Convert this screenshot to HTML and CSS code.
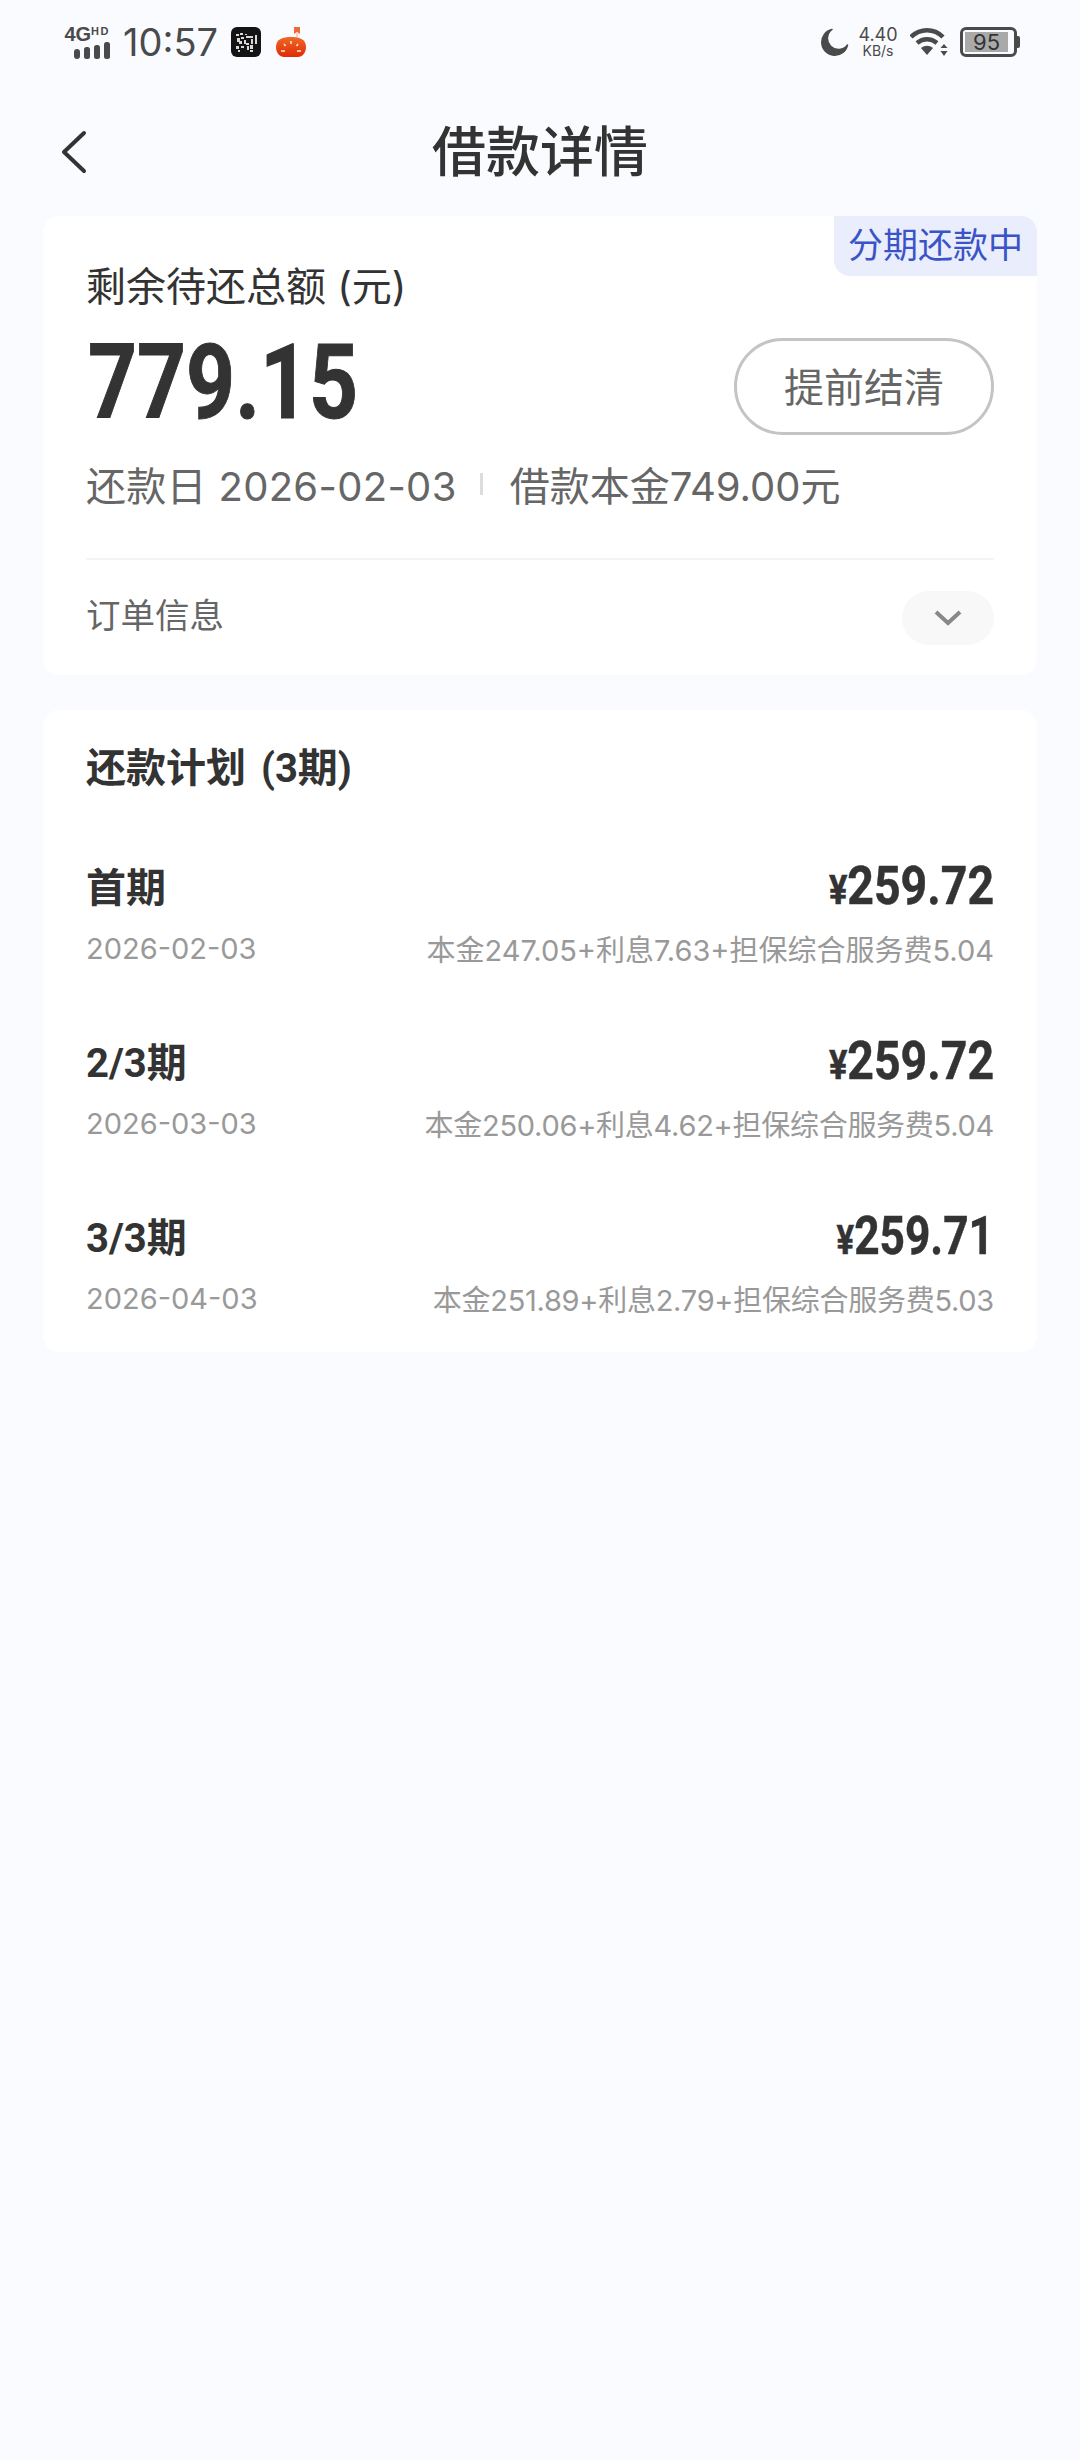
FILE: index.html
```html
<!DOCTYPE html>
<html lang="zh-CN">
<head>
  <meta charset="UTF-8" />
  <meta name="viewport" content="width=device-width, initial-scale=1.0"/>
  <title>借款详情</title>
  <link rel="stylesheet" href="styles.css">
</head>
<body>
  <div class="status-bar">
    <div class="status-left">
      <div class="net">
        <div class="net-text"><span class="net-4g">4G</span><span class="net-hd">HD</span></div>
        <svg class="net-bars" width="36" height="17" viewBox="0 0 36 17">
          <rect x="0" y="7" width="6" height="10" rx="3" fill="#4a4a4a"/>
          <rect x="10" y="5" width="6" height="12" rx="2.5" fill="#4a4a4a"/>
          <rect x="20" y="3" width="6" height="14" rx="2.5" fill="#4a4a4a"/>
          <rect x="30" y="0" width="6" height="17" rx="2.5" fill="#4a4a4a"/>
        </svg>
      </div>
      <span class="time">10:57</span>
      <svg class="app-icon" width="30" height="30" viewBox="0 0 30 30">
        <rect width="30" height="30" rx="6" fill="#141414"/>
        <path d="M5 7h3v2H5zM9 6h3v2H9zM14 7h2v1h-2zM24 8h2v9h-2zM6 11h3v4H6zM10 10h3v2h-3zM15 9h7v2h-7zM20 12h2v5h-2zM8 14h3v3H8zM13 13h2v4h-2zM15 16h3v2h-3zM5 19h3v3H5zM10 19h3v2h-3zM16 19h2v4h-2zM19 18h3v4h-3zM7 23h2v2H7zM19 23h3v2h-3z" fill="#d8d8d8"/>
      </svg>
      <svg class="app-icon" width="30" height="30" viewBox="0 0 30 30">
        <defs>
          <linearGradient id="pumpkin" x1="0" y1="0" x2="0" y2="1">
            <stop offset="0" stop-color="#ee6a24"/>
            <stop offset="1" stop-color="#e02a08"/>
          </linearGradient>
        </defs>
        <path d="M18 0h6v7l-3-2-3 2z" fill="#ee6a3a"/>
        <path d="M21 6v5" stroke="#f2a98a" stroke-width="1"/>
        <path d="M15 10c8 0 15 2 15 10 0 7-5 10-8 10H8c-3 0-8-3-8-10 0-8 7-10 15-10z" fill="url(#pumpkin)"/>
        <path d="M15 14v3M8 17l1.500 2M22 17l-1.500 2M5 24h4M21 24h4" stroke="#fbe3d2" stroke-width="1.600"/>
      </svg>
    </div>
    <div class="status-right">
      <svg width="28" height="28" viewBox="0 0 28 28">
        <path d="M11 1.500A13 13 0 1 0 26.500 17A11.100 11.100 0 1 1 11 1.500z" fill="#4a4a4a" stroke="#4a4a4a" stroke-width="1.500" stroke-linejoin="round"/>
      </svg>
      <div class="speed"><span class="speed-num">4.40</span><span class="speed-unit">KB/s</span></div>
      <svg class="wifi" width="38" height="28" viewBox="0 0 38 28">
        <path d="M1 9c9-9 23-9 32 0" fill="none" stroke="#4a4a4a" stroke-width="4.500"/>
        <path d="M7 15c6-5 14-5 20 0" fill="none" stroke="#4a4a4a" stroke-width="4.500"/>
        <path d="M11 20c4-3 8-3 12 0l-6 7z" fill="#4a4a4a"/>
        <path d="M34 16l3.500 4h-7zM34 28l3.500-5h-7z" fill="#4a4a4a"/>
      </svg>
      <div class="battery">
        <div class="battery-body"><div class="battery-fill">95</div></div>
        <div class="battery-nub"></div>
      </div>
    </div>
  </div>

  <div class="nav-bar">
    <svg class="nav-back" width="26" height="44" viewBox="0 0 26 44">
      <path d="M23 3L3 22l20 19" fill="none" stroke="#333" stroke-width="4" stroke-linecap="round" stroke-linejoin="round"/>
    </svg>
    <h1 class="nav-title">借款详情</h1>
  </div>

  <section class="card card-summary">
    <span class="tag">分期还款中</span>
    <p class="total-label">剩余待还总额 (元)</p>
    <div class="total-row">
      <span class="total-amount">779.15</span>
      <button class="btn-settle">提前结清</button>
    </div>
    <div class="total-meta">
      <span class="meta-date">还款日 2026-02-03</span>
      <i class="meta-sep"></i>
      <span>借款本金749.00元</span>
    </div>
    <div class="order-row">
      <span class="order-label">订单信息</span>
      <span class="order-toggle">
        <svg width="30" height="18" viewBox="0 0 30 18">
          <path d="M3 3l12 11L27 3" fill="none" stroke="#888" stroke-width="4"/>
        </svg>
      </span>
    </div>
  </section>

  <section class="card card-plan">
    <h2 class="plan-title">还款计划 (3期)</h2>
    <div class="plan-row">
      <div class="plan-line">
        <span class="plan-name">首期</span>
        <span class="plan-amount"><small>¥</small>259.72</span>
      </div>
      <div class="plan-line plan-sub">
        <span>2026-02-03</span>
        <span>本金247.05+利息7.63+担保综合服务费5.04</span>
      </div>
    </div>
    <div class="plan-row">
      <div class="plan-line">
        <span class="plan-name">2/3期</span>
        <span class="plan-amount"><small>¥</small>259.72</span>
      </div>
      <div class="plan-line plan-sub">
        <span>2026-03-03</span>
        <span class="plan-detail-tight">本金250.06+利息4.62+担保综合服务费5.04</span>
      </div>
    </div>
    <div class="plan-row">
      <div class="plan-line">
        <span class="plan-name">3/3期</span>
        <span class="plan-amount plan-amount-narrow"><small>¥</small>259.71</span>
      </div>
      <div class="plan-line plan-sub">
        <span>2026-04-03</span>
        <span class="plan-detail-tight">本金251.89+利息2.79+担保综合服务费5.03</span>
      </div>
    </div>
  </section>
</body>
</html>
```

FILE: styles.css
```css
* {
  box-sizing: border-box;
}
body {
  margin: 0;
  height: 2460px;
  background-color: #fafbff;
  color: #333;
  font-family: Inter, "Noto Sans CJK SC", sans-serif;
  overflow: hidden;
}
h1, h2, p {
  margin: 0;
  font-weight: normal;
}

/* status bar */
.status-bar {
  display: flex;
  justify-content: space-between;
  align-items: center;
  height: 84px;
  padding: 0 60px 0 63px;
  color: #4a4a4a;
}
.status-left, .status-right {
  display: flex;
  align-items: center;
}
.net {
  display: flex;
  flex-direction: column;
  align-items: flex-end;
  width: 47px;
  margin-right: 13px;
}
.net-text {
  display: flex;
  align-items: flex-start;
  height: 16px;
  font-family: "Liberation Sans", sans-serif;
  font-weight: 700;
  line-height: 16px;
  white-space: nowrap;
}
.net-4g {
  font-size: 20px;
}
.net-hd {
  font-size: 11px;
  letter-spacing: 1.5px;
  line-height: 11px;
}
.time {
  font-size: 38px;
  line-height: 40px;
  width: 108px;
}
.app-icon {
  margin-right: 15px;
}
.speed {
  display: flex;
  flex-direction: column;
  align-items: center;
  width: 42px;
  margin: 0 11px 0 8px;
  line-height: 1;
}
.speed-num {
  font-size: 18px;
}
.speed-unit {
  font-size: 14px;
}
.wifi {
  margin-right: 12px;
}
.battery {
  display: flex;
  align-items: center;
}
.battery-body {
  width: 57px;
  height: 30px;
  border: 3px solid #4a4a4a;
  border-radius: 6px;
  padding: 2px;
}
.battery-fill {
  height: 100%;
  width: 92%;
  background-color: #a9a9a9;
  color: #333;
  font-size: 22px;
  line-height: 20px;
  text-align: center;
}
.battery-nub {
  width: 3px;
  height: 12px;
  background-color: #4a4a4a;
  border-radius: 0 2px 2px 0;
}

/* nav */
.nav-bar {
  position: relative;
  display: flex;
  align-items: center;
  justify-content: center;
  height: 132px;
}
.nav-back {
  position: absolute;
  left: 61px;
  top: 46px;
}
.nav-title {
  font-size: 54px;
  font-weight: 500;
  line-height: 70px;
  padding-top: 5px;
}

/* cards */
.card {
  position: relative;
  margin: 0 43px 35px;
  padding: 0 43px;
  background-color: #fff;
  border-radius: 16px;
}
.card-summary {
  height: 459px;
  padding-top: 44px;
}
.tag {
  position: absolute;
  top: 0;
  right: 0;
  height: 60px;
  padding: 0 14px;
  background-color: #e9edfc;
  border-radius: 0 16px 0 16px;
  color: #3a54c8;
  font-size: 35px;
  line-height: 58px;
}
.total-label {
  font-size: 40px;
  line-height: 54px;
}
.total-row {
  display: flex;
  justify-content: space-between;
  align-items: center;
  height: 97px;
  margin-top: 24px;
}
.total-amount {
  display: inline-block;
  margin-left: 2px;
  padding-bottom: 8px;
  font-family: Roboto, sans-serif;
  font-size: 103px;
  font-weight: 700;
  line-height: 97px;
  -webkit-text-stroke: 1px #333;
  transform: scaleX(0.83);
  transform-origin: left center;
}
.btn-settle {
  width: 260px;
  height: 97px;
  padding: 0 0 4px;
  background: #fff;
  border: 3px solid #c4c4c4;
  border-radius: 49px;
  color: #666;
  font-family: inherit;
  font-size: 40px;
}
.total-meta {
  display: flex;
  align-items: center;
  height: 54px;
  margin-top: 22px;
  color: #666;
  font-size: 40px;
}
.meta-date {
  letter-spacing: 0.3px;
}
.meta-sep {
  width: 3px;
  height: 22px;
  margin: 0 27px 0 23px;
  background-color: #ddd;
}
.order-row {
  display: flex;
  justify-content: space-between;
  align-items: center;
  height: 114px;
  margin-top: 47px;
  border-top: 2px solid #f4f4f4;
  padding-bottom: 6px;
}
.order-label {
  color: #666;
  font-size: 34.5px;
}
.order-toggle {
  display: flex;
  justify-content: center;
  align-items: center;
  width: 92px;
  height: 54px;
  margin-top: 10px;
  background-color: #f8f8f8;
  border-radius: 27px;
}

/* plan */
.card-plan {
  height: 642px;
  padding-top: 32px;
}
.plan-title {
  font-family: Roboto, "Noto Sans CJK SC", sans-serif;
  font-size: 40px;
  font-weight: 700;
  line-height: 54px;
  word-spacing: 5px;
}
.plan-row {
  height: 175px;
}
.plan-row:first-of-type {
  margin-top: 59px;
}
.plan-line {
  display: flex;
  justify-content: space-between;
  align-items: center;
  height: 60px;
}
.plan-name {
  font-family: Roboto, "Noto Sans CJK SC", sans-serif;
  font-size: 40px;
  font-weight: 700;
}
.plan-amount {
  display: inline-block;
  font-family: Roboto, sans-serif;
  font-size: 54px;
  font-weight: 700;
  -webkit-text-stroke: 0.5px #333;
  transform: scaleX(0.86);
  transform-origin: right center;
}
.plan-amount-narrow {
  transform: scaleX(0.82);
}
.plan-amount small {
  font-size: 40px;
}
.plan-sub {
  height: 50px;
  margin-top: 8px;
  color: #999;
  font-size: 29px;
}
.plan-detail-tight {
  letter-spacing: -0.27px;
}
```
